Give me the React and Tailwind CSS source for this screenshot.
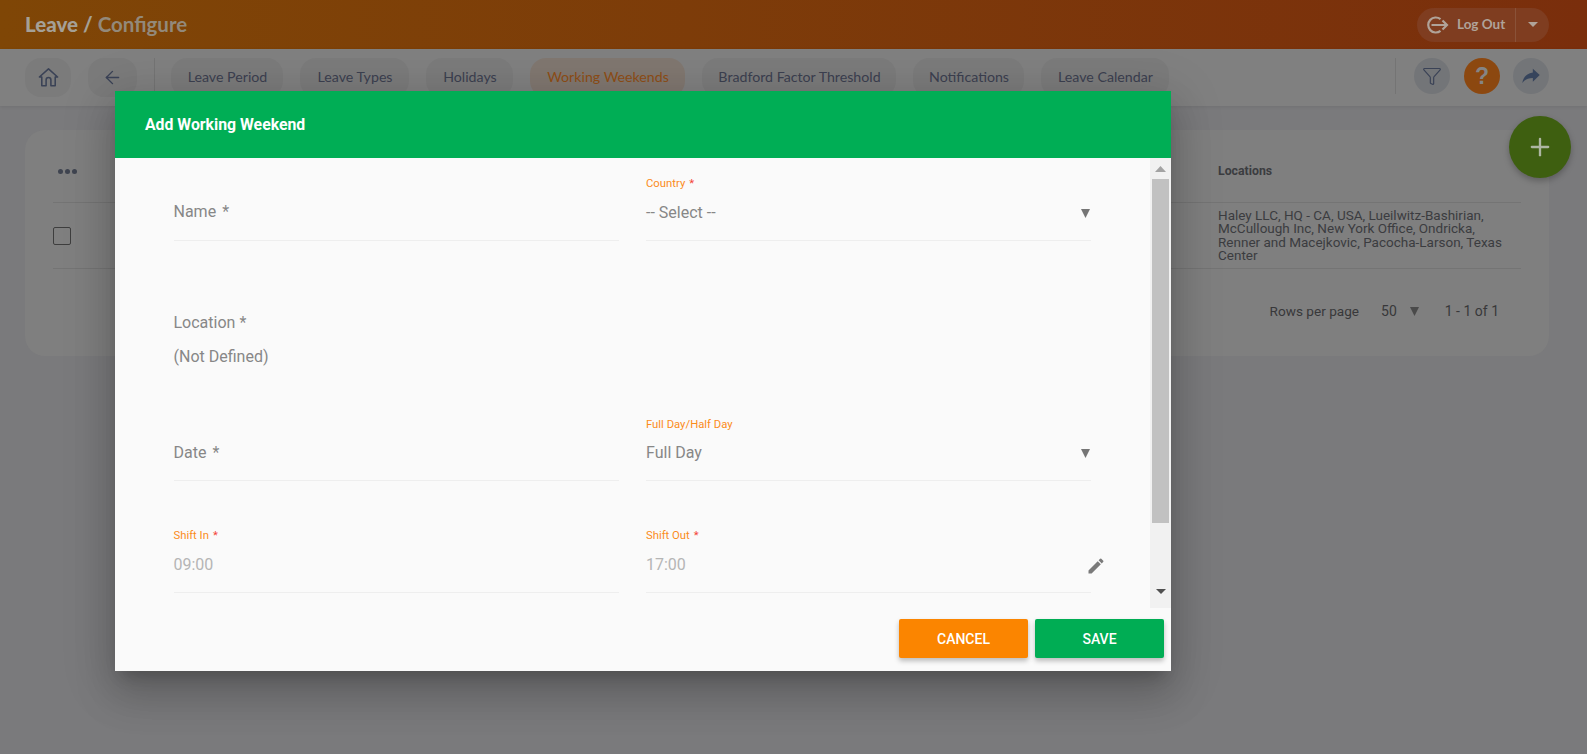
import React from "react";
import { ArrowLeft, Funnel, Plus } from "lucide-react";
import { MdEdit } from "react-icons/md";

const tabs = [
  { label: "Leave Period", w: "w-[112px]" },
  { label: "Leave Types", w: "w-[109px]" },
  { label: "Holidays", w: "w-[87px]" },
  { label: "Working Weekends", w: "w-[155px]", active: true },
  { label: "Bradford Factor Threshold", w: "w-[194px]" },
  { label: "Notifications", w: "w-[111px]" },
  { label: "Leave Calendar", w: "w-[128px]" },
];

function Arrow({ className }) {
  return (
    <svg viewBox="0 0 10 9" preserveAspectRatio="none" className={className} fill="currentColor">
      <path d="M0 0h10L5 9z" />
    </svg>
  );
}

function Field({ label, req, value, star, tight, valueClass = "text-[#878787]", arrow, children }) {
  return (
    <div className="relative w-[445px] border-b border-[#eeeeee] pb-[15px] font-['Roboto',sans-serif]">
      <div className="h-[14px] text-[11.3px] leading-[14px] text-[#fb8c1a]">
        {label}
        {req && <span className="ml-[4px] text-[#f44336]">*</span>}
      </div>
      <div className={`flex h-6 items-center justify-between text-[16px] leading-6 ${tight ? "mt-[9px]" : "mt-[10px]"} ${valueClass}`}>
        <span>
          {value}
          {star && <span className="ml-[6px]">*</span>}
        </span>
        {arrow && <Arrow className="mr-[1px] h-[9px] w-[9px] text-[#757575]" />}
      </div>
      {children}
    </div>
  );
}

export default function App() {
  return (
    <div className="relative h-[754px] w-full overflow-hidden bg-[#7a7a7c] font-['Roboto',sans-serif]">
      <header className="flex h-[49px] items-center justify-between bg-gradient-to-r from-[#7f4606] to-[#7a2e0c] pl-[25px] pr-[38px]">
        <div className="font-['Lato',sans-serif] text-[20.5px] font-bold text-[#a5a096]">
          <span className="font-black">Leave</span> <span className="font-black">/</span> <span className="text-[#93897a]">Configure</span>
        </div>
        <div className="flex h-[34px] w-[132px] items-center rounded-full bg-[#7f3d20] text-[#b0a399]">
          <svg viewBox="0 0 24 18" className="ml-[8px] h-[18px] w-[24px]" fill="none" stroke="currentColor" strokeWidth="2.2">
            <path d="M15.5 3.2A7.5 7.5 0 1 0 15.5 14.8" />
            <path d="M6.5 9H22M17.5 4.5 22 9l-4.5 4.5" />
          </svg>
          <span className="ml-[8px] w-[58px] font-['Lato',sans-serif] text-[13.5px] font-bold">Log Out</span>
          <div className="flex h-full flex-1 items-center justify-center border-l border-[#8a5238]">
            <Arrow className="h-[5px] w-[10px] text-[#b0a399]" />
          </div>
        </div>
      </header>

      <nav className="flex h-[57px] items-start justify-between bg-[#808080] pl-[25px] pr-[38px] pt-[9px] shadow-[0_1px_3px_rgba(0,0,0,0.08)]">
        <div className="flex items-center">
          <button className="flex h-[39px] w-[46px] items-center justify-center rounded-[16px] bg-[#7b7b7b] text-[#3a4256]">
            <svg viewBox="0 0 24 24" className="h-[23px] w-[23px]" fill="none" stroke="currentColor" strokeWidth="1.6" strokeLinejoin="round" strokeLinecap="round">
              <path d="M2.5 11.5 12 3l9.5 8.5H19v9h-4.5v-6a2.5 2.5 0 0 0-5 0v6H5v-9z" />
            </svg>
          </button>
          <button className="ml-[17px] flex h-[39px] w-[49px] items-center justify-center rounded-[16px] bg-[#7b7b7b] text-[#3a4256]">
            <ArrowLeft size={21} strokeWidth={1.6} />
          </button>
          <div className="ml-[17px] h-[39px] w-px bg-[#747474]" />
          <div className="ml-[16px] flex gap-[17px]">
            {tabs.map((t) => (
              <div
                key={t.label}
                className={`flex h-[39px] items-center justify-center whitespace-nowrap rounded-[16px] pb-[2px] pl-[1px] font-['Lato',sans-serif] text-[14.2px] ${t.w} ${
                  t.active ? "bg-[#807770] text-[#8f4e16]" : "bg-[#7b7b7b] text-[#3c4050]"
                }`}
              >
                {t.label}
              </div>
            ))}
          </div>
        </div>
        <div className="flex items-start">
          <div className="mr-[18px] h-[36px] w-px bg-[#747474]" />
          <div className="flex h-9 w-9 items-center justify-center rounded-full bg-[#737578] text-[#3a4256]">
            <Funnel size={20} strokeWidth={1.4} />
          </div>
          <div className="ml-[14px] flex h-9 w-9 items-center justify-center rounded-full bg-[#8c4810] font-['Liberation_Sans',sans-serif] text-[23px] font-bold text-[#858585]">
            ?
          </div>
          <div className="ml-[13px] flex h-9 w-9 items-center justify-center rounded-full bg-[#737578] text-[#36445c]">
            <svg viewBox="0 0 24 24" className="h-[22px] w-[22px]" fill="currentColor">
              <path d="M21.5 11 14 4v4.2C7 9 3.6 14 2.5 19.5c2.7-3.7 6.3-5.4 11.5-5.4V18.2z" />
            </svg>
          </div>
        </div>
      </nav>

      <main className="ml-[25px] mr-[38px] mt-[24px] h-[226px] rounded-[20px] bg-[#7f7f7f] pl-[28px] pr-[28px] text-[#3b3c40]">
        <div className="flex h-[73px] items-center justify-between border-b border-[#747474] pt-[10px]">
          <div className="ml-[5px] flex gap-[2px]">
            <span className="h-[5px] w-[5px] rounded-full bg-[#3f4450]" />
            <span className="h-[5px] w-[5px] rounded-full bg-[#3f4450]" />
            <span className="h-[5px] w-[5px] rounded-full bg-[#3f4450]" />
          </div>
          <div className="w-[303px] text-[12.3px] font-bold">Locations</div>
        </div>
        <div className="flex h-[66px] items-center justify-between border-b border-[#747474]">
          <div className="h-[18px] w-[18px] rounded-[2px] border-[1.5px] border-[#3e3e3e]" />
          <div className="w-[303px] pr-[13px] text-[13.5px] leading-[13.5px]">
            Haley LLC, HQ - CA, USA, Lueilwitz-Bashirian, McCullough Inc, New York Office, Ondricka, Renner and Macejkovic, Pacocha-Larson, Texas Center
          </div>
        </div>
        <div className="mr-[22px] mt-[32px] flex items-center justify-end text-[13.6px] leading-5 text-[#38383a]">
          <span>Rows per page</span>
          <span className="ml-[22px] text-[14px]">50</span>
          <Arrow className="ml-[13px] h-[9px] w-[9px] text-[#4a4a4a]" />
          <span className="ml-[26px] text-[14px]">1 - 1 of 1</span>
        </div>
      </main>

      <button className="absolute left-[1509px] top-[116px] flex h-[62px] w-[62px] items-center justify-center rounded-full bg-[#3e5f10] text-[#aeb6a2] shadow-[0_3px_6px_rgba(0,0,0,0.25)]">
        <Plus size={28} strokeWidth={2} />
      </button>

      <div className="absolute left-[115px] top-[91px] flex h-[580px] w-[1056px] flex-col bg-[#fafafa] shadow-[0_11px_15px_-7px_rgba(0,0,0,0.2),0_24px_38px_3px_rgba(0,0,0,0.14),0_9px_46px_8px_rgba(0,0,0,0.12)]">
        <div className="flex h-[67px] items-center bg-[#00ae55] pl-[30px] text-[15.8px] font-bold text-white">
          Add Working Weekend
        </div>
        <div className="flex h-[450px]">
          <div className="flex-1 pl-[58.5px] pt-[19px]">
            <div className="flex gap-[27.5px]">
              <Field value="Name" star valueClass="-translate-y-px text-[#878787]" />
              <Field label="Country" req value="-- Select --" arrow />
            </div>
            <div className="mt-[70px] text-[16px] leading-6 text-[#878787]">
              <div>Location *</div>
              <div className="mt-[10px]">(Not Defined)</div>
            </div>
            <div className="mt-[49px] flex gap-[27.5px]">
              <Field value="Date" star tight />
              <Field label="Full Day/Half Day" value="Full Day" arrow tight />
            </div>
            <div className="mt-[48px] flex gap-[27.5px]">
              <Field label="Shift In" req value="09:00" valueClass="text-[#b5b5b5]" />
              <Field label="Shift Out" req value="17:00" valueClass="text-[#b5b5b5]">
                <MdEdit className="absolute -right-[15px] top-[27px] h-[20px] w-[20px] text-[#7a7a7a]" />
              </Field>
            </div>
          </div>
          <div className="flex w-[21px] flex-col bg-[#f1f1f1] pr-[2px]">
            <div className="flex h-[21px] items-center justify-center pl-[2px]">
              <Arrow className="h-[6px] w-[11px] rotate-180 text-[#a3a3a3]" />
            </div>
            <div className="ml-[2px] h-[344px] bg-[#c1c1c1]" />
            <div className="flex flex-1 items-end justify-center pb-[14px] pl-[2px]">
              <Arrow className="h-[5px] w-[10px] text-[#505050]" />
            </div>
          </div>
        </div>
        <div className="flex flex-1 items-start justify-end gap-[7px] pr-[7px] pt-[11px]">
          <button className="h-[39px] w-[129px] rounded-[2px] bg-[#fb8500] pt-[1px] text-[14px] font-medium uppercase text-white shadow-[0_3px_5px_rgba(0,0,0,0.25)]">
            Cancel
          </button>
          <button className="h-[39px] w-[129px] rounded-[2px] bg-[#00ad54] pt-[1px] text-[14px] font-medium uppercase text-white shadow-[0_3px_5px_rgba(0,0,0,0.25)]">
            Save
          </button>
        </div>
      </div>
    </div>
  );
}
